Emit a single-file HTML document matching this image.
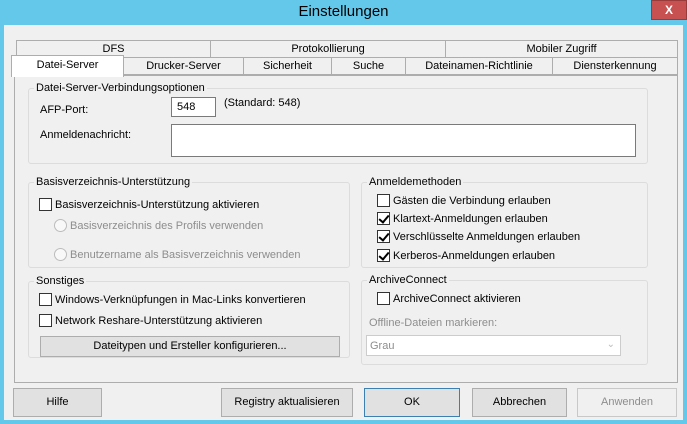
<!DOCTYPE html>
<html><head><style>
*{box-sizing:border-box;margin:0;padding:0}
body{width:687px;height:424px;background:#63c8ea;font-family:"Liberation Sans",sans-serif;font-size:11px;color:#000;position:relative;overflow:hidden}
.a{position:absolute}
.title{left:0;top:0;width:687px;height:25px;text-align:center;font-size:15px;line-height:24px;color:#000}
.close{left:651px;top:0;width:36px;height:20px;background:#c75050;color:#fff;font-weight:bold;text-align:center;line-height:18px;font-size:12px;border:1px solid #9a3b3b}
.client{left:4px;top:25px;width:679px;height:395px;background:#f0f0f0}
.tab{position:absolute;height:18px;border:1px solid #adadad;background:#f0f0f0;text-align:center;line-height:16px;font-size:11px}
.panel{left:14px;top:75px;width:664px;height:308px;border:1px solid #adadad;background:#f0f0f0}
.grp{position:absolute;border:1px solid #dcdcdc;border-radius:3px}
.gt{position:absolute;background:#f0f0f0;padding:0 2px;line-height:14px}
.cb{position:absolute;width:13px;height:13px;border:1px solid #333;background:#fff}
.cb.on::after{content:"";position:absolute;left:3px;top:0px;width:4px;height:8px;border:solid #000;border-width:0 2px 2px 0;transform:rotate(40deg)}
.rb{position:absolute;width:13px;height:13px;border:1px solid #bcbcbc;border-radius:50%;background:#f8f8f8}
.t{position:absolute;white-space:nowrap;line-height:14px}
.g{color:#8d8d8d}
.btn{position:absolute;border:1px solid #adadad;background:#e1e1e1;text-align:center;font-size:11px}
</style></head><body>
<div class="a title">Einstellungen</div>
<div class="a close">X</div>
<div class="a client"></div>
<div class="tab" style="left:16px;top:40px;width:195px">DFS</div>
<div class="tab" style="left:210px;top:40px;width:236px">Protokollierung</div>
<div class="tab" style="left:445px;top:40px;width:233px">Mobiler Zugriff</div>
<div class="a panel"></div>
<div class="tab" style="left:123px;top:57px;width:121px">Drucker-Server</div>
<div class="tab" style="left:243px;top:57px;width:89px">Sicherheit</div>
<div class="tab" style="left:331px;top:57px;width:75px">Suche</div>
<div class="tab" style="left:405px;top:57px;width:148px">Dateinamen-Richtlinie</div>
<div class="tab" style="left:552px;top:57px;width:126px">Diensterkennung</div>
<div class="tab" style="left:11px;top:55px;width:113px;height:22px;background:#fff;border-bottom:none;line-height:18px;z-index:2">Datei-Server</div>

<div class="grp" style="left:28px;top:88px;width:620px;height:76px"></div>
<div class="gt" style="left:34px;top:81px">Datei-Server-Verbindungsoptionen</div>
<div class="t" style="left:40px;top:103px">AFP-Port:</div>
<div class="a" style="left:171px;top:97px;width:45px;height:20px;border:1px solid #7a7a7a;background:#fff;padding:3px 5px">548</div>
<div class="t" style="left:224px;top:96px">(Standard: 548)</div>
<div class="t" style="left:40px;top:128px">Anmeldenachricht:</div>
<div class="a" style="left:171px;top:124px;width:465px;height:33px;border:1px solid #7a7a7a;background:#fff"></div>

<div class="grp" style="left:28px;top:182px;width:322px;height:86px"></div>
<div class="gt" style="left:34px;top:175px">Basisverzeichnis-Unterstützung</div>
<div class="cb" style="left:39px;top:198px"></div>
<div class="t" style="left:55px;top:198px">Basisverzeichnis-Unterstützung aktivieren</div>
<div class="rb" style="left:54px;top:219px"></div>
<div class="t g" style="left:70px;top:219px">Basisverzeichnis des Profils verwenden</div>
<div class="rb" style="left:54px;top:248px"></div>
<div class="t g" style="left:70px;top:248px">Benutzername als Basisverzeichnis verwenden</div>

<div class="grp" style="left:28px;top:281px;width:322px;height:77px"></div>
<div class="gt" style="left:34px;top:274px">Sonstiges</div>
<div class="cb" style="left:39px;top:293px"></div>
<div class="t" style="left:55px;top:293px">Windows-Verknüpfungen in Mac-Links konvertieren</div>
<div class="cb" style="left:39px;top:314px"></div>
<div class="t" style="left:55px;top:314px">Network Reshare-Unterstützung aktivieren</div>
<div class="btn" style="left:40px;top:336px;width:300px;height:21px;line-height:19px">Dateitypen und Ersteller konfigurieren...</div>

<div class="grp" style="left:361px;top:182px;width:287px;height:86px"></div>
<div class="gt" style="left:367px;top:175px">Anmeldemethoden</div>
<div class="cb" style="left:377px;top:194px"></div>
<div class="t" style="left:393px;top:194px">Gästen die Verbindung erlauben</div>
<div class="cb on" style="left:377px;top:212px"></div>
<div class="t" style="left:393px;top:212px">Klartext-Anmeldungen erlauben</div>
<div class="cb on" style="left:377px;top:230px"></div>
<div class="t" style="left:393px;top:230px">Verschlüsselte Anmeldungen erlauben</div>
<div class="cb on" style="left:377px;top:249px"></div>
<div class="t" style="left:393px;top:249px">Kerberos-Anmeldungen erlauben</div>

<div class="grp" style="left:361px;top:280px;width:287px;height:85px"></div>
<div class="gt" style="left:367px;top:273px">ArchiveConnect</div>
<div class="cb" style="left:377px;top:292px"></div>
<div class="t" style="left:393px;top:292px">ArchiveConnect aktivieren</div>
<div class="t g" style="left:369px;top:316px">Offline-Dateien markieren:</div>
<div class="a g" style="left:366px;top:335px;width:255px;height:21px;border:1px solid #ccc;background:#fff;padding:3px 3px;line-height:14px">Grau<span style="position:absolute;right:5px;top:2px;font-size:10px;color:#bbb">&#8964;</span></div>

<div class="btn" style="left:13px;top:388px;width:89px;height:29px;line-height:27px">Hilfe</div>
<div class="btn" style="left:221px;top:388px;width:132px;height:29px;line-height:27px">Registry aktualisieren</div>
<div class="btn" style="left:364px;top:388px;width:96px;height:29px;line-height:27px;border-color:#3c7fb1">OK</div>
<div class="btn" style="left:472px;top:388px;width:95px;height:29px;line-height:27px">Abbrechen</div>
<div class="btn" style="left:577px;top:388px;width:100px;height:29px;line-height:27px;color:#8d8d8d;background:#f0f0f0;border-color:#c8c8c8">Anwenden</div>
</body></html>
